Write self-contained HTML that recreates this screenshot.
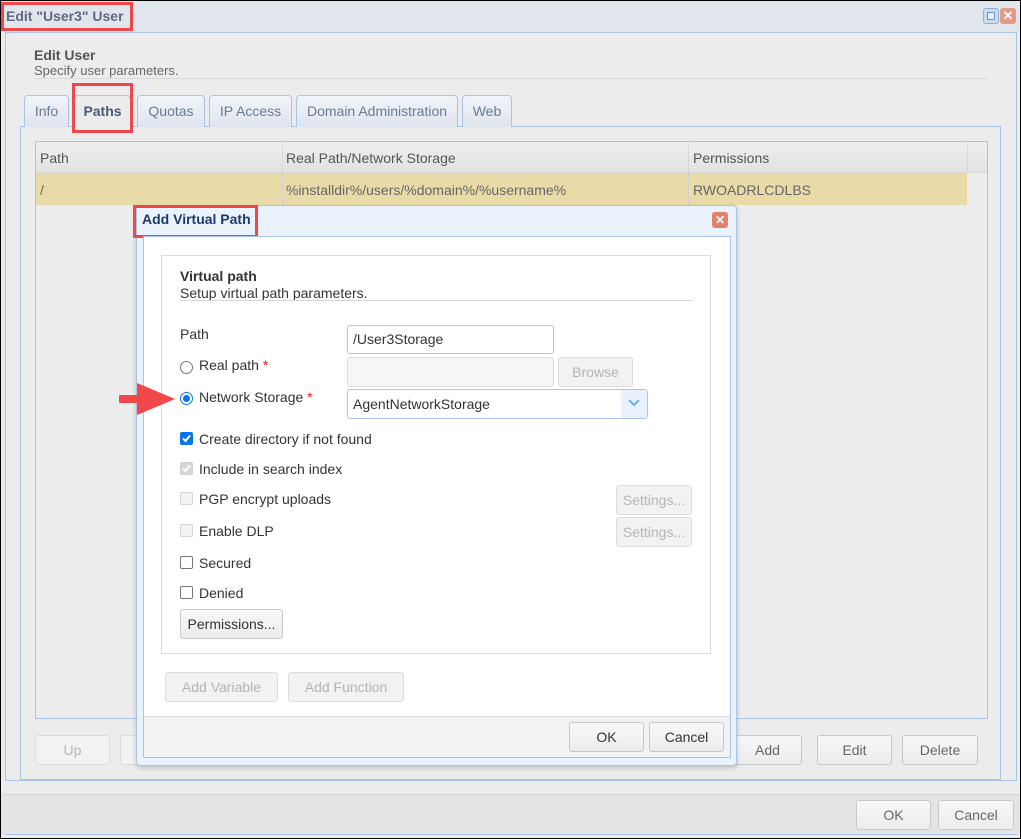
<!DOCTYPE html>
<html><head><meta charset="utf-8"><style>
*{box-sizing:border-box;margin:0;padding:0}
body{width:1021px;height:839px;overflow:hidden;background:#000;font-family:"Liberation Sans",Arial,sans-serif;font-size:14px;color:#333;position:relative}
.a{position:absolute}
.btn{position:absolute;border:1px solid #c8c8c8;border-radius:3px;background:linear-gradient(#f8f8f8,#ececec);text-align:center;font-size:14px;color:#333}
.dis{color:#b4b4b4;border-color:#dcdcdc;background:#f2f2f2}
.tab{position:absolute;top:95px;height:32px;border:1px solid #a9c4e6;border-bottom:none;border-radius:4px 4px 0 0;background:linear-gradient(#f1f4f9,#dfe5ee);color:#6a7a91;text-align:center;line-height:30px;font-size:14px}
.red{position:absolute;border:3px solid #f0474b}
.cb{position:absolute;width:13px;height:13px;border:1px solid #767676;border-radius:2px;background:#fff}
.cbd{border-color:#d4d4d4;background:#f3f3f3}
.lbl{position:absolute;font-size:14px;color:#333}
.inp{position:absolute;border:1px solid #a9c4e6;border-radius:3px;background:#fff;padding-left:5px;line-height:26px}
</style></head><body>
<div class="a" style="left:1px;top:1px;width:1019px;height:837px;background:#ececec"></div>
<!-- title bar -->
<div class="a" style="left:1px;top:1px;width:1019px;height:31px;background:#e1e5ec"></div>
<div class="a" style="left:6px;top:8px;font-size:14px;font-weight:bold;color:#5b6a85">Edit "User3" User</div>
<div class="red" style="left:1px;top:2px;width:132px;height:29px"></div>
<div class="a" style="left:983px;top:8px;width:16px;height:16px;border:1px solid #8eaed8;border-radius:3px;background:#c9dbf3"><div class="a" style="left:3px;top:3px;width:8px;height:8px;border:1px solid #6f92c4;background:#e6eefa"></div></div>
<div class="a" style="left:1000px;top:8px;width:16px;height:16px;border-radius:3px;background:#e59a85;color:#fff;font-size:13px;font-weight:bold;line-height:16px;text-align:center">✕</div>
<!-- main panel -->
<div class="a" style="left:5px;top:32px;width:1012px;height:749px;border:1px solid #a9c4e6;background:#ececec"></div>
<div class="a" style="left:34px;top:47px;font-weight:bold;color:#555">Edit User</div>
<div class="a" style="left:34px;top:63px;font-size:13px;color:#666">Specify user parameters.</div>
<div class="a" style="left:34px;top:78px;width:954px;height:1px;background:#d8d8d8"></div>
<!-- tabs -->
<div class="a" style="left:20px;top:126px;width:981px;height:654px;border:1px solid #a9c4e6;background:#ececec"></div>
<div class="tab" style="left:24px;width:45px">Info</div>
<div class="tab" style="left:74px;width:57px;background:#ececec;color:#4a5b78;font-weight:bold;height:33px">Paths</div>
<div class="tab" style="left:137px;width:68px">Quotas</div>
<div class="tab" style="left:209px;width:83px">IP Access</div>
<div class="tab" style="left:296px;width:162px">Domain Administration</div>
<div class="tab" style="left:462px;width:50px">Web</div>
<div class="red" style="left:72px;top:83px;width:61px;height:50px"></div>
<!-- grid -->
<div class="a" style="left:35px;top:141px;width:953px;height:578px;border:1px solid #a9c4e6;background:#ececec"></div>
<div class="a" style="left:36px;top:142px;width:951px;height:31px;background:linear-gradient(#efefef,#e2e2e2);border-bottom:1px solid #d6d6d6"></div>
<div class="a" style="left:282px;top:142px;width:1px;height:63px;border-left:1px dotted #c8c8c8"></div>
<div class="a" style="left:688px;top:142px;width:1px;height:63px;border-left:1px dotted #c8c8c8"></div>
<div class="a" style="left:967px;top:142px;width:1px;height:31px;border-left:1px dotted #c8c8c8"></div>
<div class="a" style="left:40px;top:150px;color:#555">Path</div>
<div class="a" style="left:286px;top:150px;color:#555">Real Path/Network Storage</div>
<div class="a" style="left:693px;top:150px;color:#555">Permissions</div>
<div class="a" style="left:36px;top:173px;width:931px;height:32px;background:#e9dba8"></div>
<div class="a" style="left:282px;top:173px;width:1px;height:32px;border-left:1px dotted #c8c8c8"></div>
<div class="a" style="left:688px;top:173px;width:1px;height:32px;border-left:1px dotted #c8c8c8"></div>
<div class="a" style="left:40px;top:182px;color:#666">/</div>
<div class="a" style="left:286px;top:182px;color:#666">%installdir%/users/%domain%/%username%</div>
<div class="a" style="left:693px;top:182px;color:#666">RWOADRLCDLBS</div>
<!-- bottom buttons -->
<div class="btn dis" style="left:35px;top:735px;width:75px;height:30px;line-height:28px">Up</div>
<div class="btn dis" style="left:120px;top:735px;width:75px;height:30px"></div>
<div class="btn" style="left:733px;top:735px;width:69px;height:30px;line-height:28px;color:#666">Add</div>
<div class="btn" style="left:817px;top:735px;width:75px;height:30px;line-height:28px;color:#666">Edit</div>
<div class="btn" style="left:902px;top:735px;width:76px;height:30px;line-height:28px;color:#666">Delete</div>
<!-- footer -->
<div class="a" style="left:1px;top:794px;width:1019px;height:1px;background:#d6d6d6"></div>
<div class="a" style="left:1px;top:795px;width:1019px;height:40px;background:#e4e4e4"></div>
<div class="a" style="left:5px;top:834px;width:1012px;height:1px;background:#a9c4e6"></div>
<div class="btn" style="left:856px;top:800px;width:75px;height:30px;line-height:28px;color:#666">OK</div>
<div class="btn" style="left:938px;top:800px;width:76px;height:30px;line-height:28px;color:#666">Cancel</div>
<!-- dialog -->
<div class="a" style="left:136px;top:205px;width:601px;height:561px;border:1px solid #a9c4e6;border-radius:4px;background:#eaf2fd;box-shadow:0 2px 5px rgba(0,0,0,.2)"></div>
<div class="a" style="left:142px;top:211px;font-weight:bold;color:#1e3a6b">Add Virtual Path</div>
<div class="red" style="left:133px;top:205px;width:125px;height:33px"></div>
<div class="a" style="left:712px;top:212px;width:16px;height:16px;border-radius:3px;background:#e0836a;color:#fff;font-size:12px;font-weight:bold;line-height:16px;text-align:center">✕</div>
<div class="a" style="left:143px;top:236px;width:588px;height:522px;border:1px solid #a9c4e6;background:#fff"></div>
<div class="a" style="left:144px;top:716px;width:586px;height:41px;background:#f2f2f2;border-top:1px solid #dcdcdc"></div>
<div class="btn" style="left:569px;top:722px;width:75px;height:30px;line-height:28px">OK</div>
<div class="btn" style="left:649px;top:722px;width:75px;height:30px;line-height:28px">Cancel</div>
<!-- fieldset -->
<div class="a" style="left:161px;top:255px;width:550px;height:399px;border:1px solid #dcdcdc"></div>
<div class="a" style="left:180px;top:268px;font-weight:bold;color:#333">Virtual path</div>
<div class="a" style="left:180px;top:285px;font-size:14px;color:#333">Setup virtual path parameters.</div>
<div class="a" style="left:180px;top:300px;width:513px;height:1px;background:#d8d8d8"></div>
<div class="lbl" style="left:180px;top:326px">Path</div>
<div class="inp" style="left:347px;top:325px;width:207px;height:29px">/User3Storage</div>
<div class="a" style="left:180px;top:361px;width:13px;height:13px;border:1px solid #767676;border-radius:50%;background:#fff"></div>
<div class="lbl" style="left:199px;top:357px">Real path <span style="color:#e02020">*</span></div>
<div class="inp" style="left:347px;top:357px;width:207px;height:30px;border-color:#dcdcdc;background:#f6f6f6"></div>
<div class="btn dis" style="left:558px;top:357px;width:75px;height:30px;line-height:28px">Browse</div>
<div class="a" style="left:180px;top:392px;width:13px;height:13px;border:1px solid #0a74f0;border-radius:50%;background:#fff"><div class="a" style="left:2px;top:2px;width:7px;height:7px;border-radius:50%;background:#0a74f0"></div></div>
<div class="lbl" style="left:199px;top:389px">Network Storage <span style="color:#e02020">*</span></div>
<div class="inp" style="left:347px;top:389px;width:301px;height:30px;line-height:28px">AgentNetworkStorage</div>
<div class="a" style="left:621px;top:390px;width:26px;height:28px;background:#e8f1fd;border-radius:0 3px 3px 0"></div>
<svg class="a" style="left:627px;top:398px" width="14" height="10" viewBox="0 0 14 10"><path d="M2 2 L7 7 L12 2" fill="none" stroke="#6aaeea" stroke-width="2"/></svg>
<svg class="a" style="left:119px;top:382px" width="58" height="34" viewBox="0 0 58 34"><path d="M2 17 H22" stroke="#f0474b" stroke-width="8" stroke-linecap="round"/><path d="M18 1 L56 17 L18 33 Z" fill="#f0474b"/></svg>
<div class="cb" style="left:180px;top:432px;border-color:#0a74f0;background:#0a74f0"><svg class="a" style="left:0;top:0" width="11" height="11" viewBox="0 0 11 11"><path d="M2 5.5 L4.5 8 L9 2.5" fill="none" stroke="#fff" stroke-width="2"/></svg></div>
<div class="lbl" style="left:199px;top:431px">Create directory if not found</div>
<div class="cb cbd" style="left:180px;top:462px;background:#d6d6d6;border-color:#d0d0d0"><svg class="a" style="left:0;top:0" width="11" height="11" viewBox="0 0 11 11"><path d="M2 5.5 L4.5 8 L9 2.5" fill="none" stroke="#fff" stroke-width="2"/></svg></div>
<div class="lbl" style="left:199px;top:461px">Include in search index</div>
<div class="cb cbd" style="left:180px;top:492px"></div>
<div class="lbl" style="left:199px;top:491px">PGP encrypt uploads</div>
<div class="btn dis" style="left:616px;top:485px;width:76px;height:30px;line-height:28px">Settings...</div>
<div class="cb cbd" style="left:180px;top:524px"></div>
<div class="lbl" style="left:199px;top:523px">Enable DLP</div>
<div class="btn dis" style="left:616px;top:517px;width:76px;height:30px;line-height:28px">Settings...</div>
<div class="cb" style="left:180px;top:556px"></div>
<div class="lbl" style="left:199px;top:555px">Secured</div>
<div class="cb" style="left:180px;top:586px"></div>
<div class="lbl" style="left:199px;top:585px">Denied</div>
<div class="btn" style="left:180px;top:609px;width:103px;height:30px;line-height:28px">Permissions...</div>
<div class="btn dis" style="left:165px;top:672px;width:113px;height:30px;line-height:28px">Add Variable</div>
<div class="btn dis" style="left:288px;top:672px;width:116px;height:30px;line-height:28px">Add Function</div>
</body></html>
